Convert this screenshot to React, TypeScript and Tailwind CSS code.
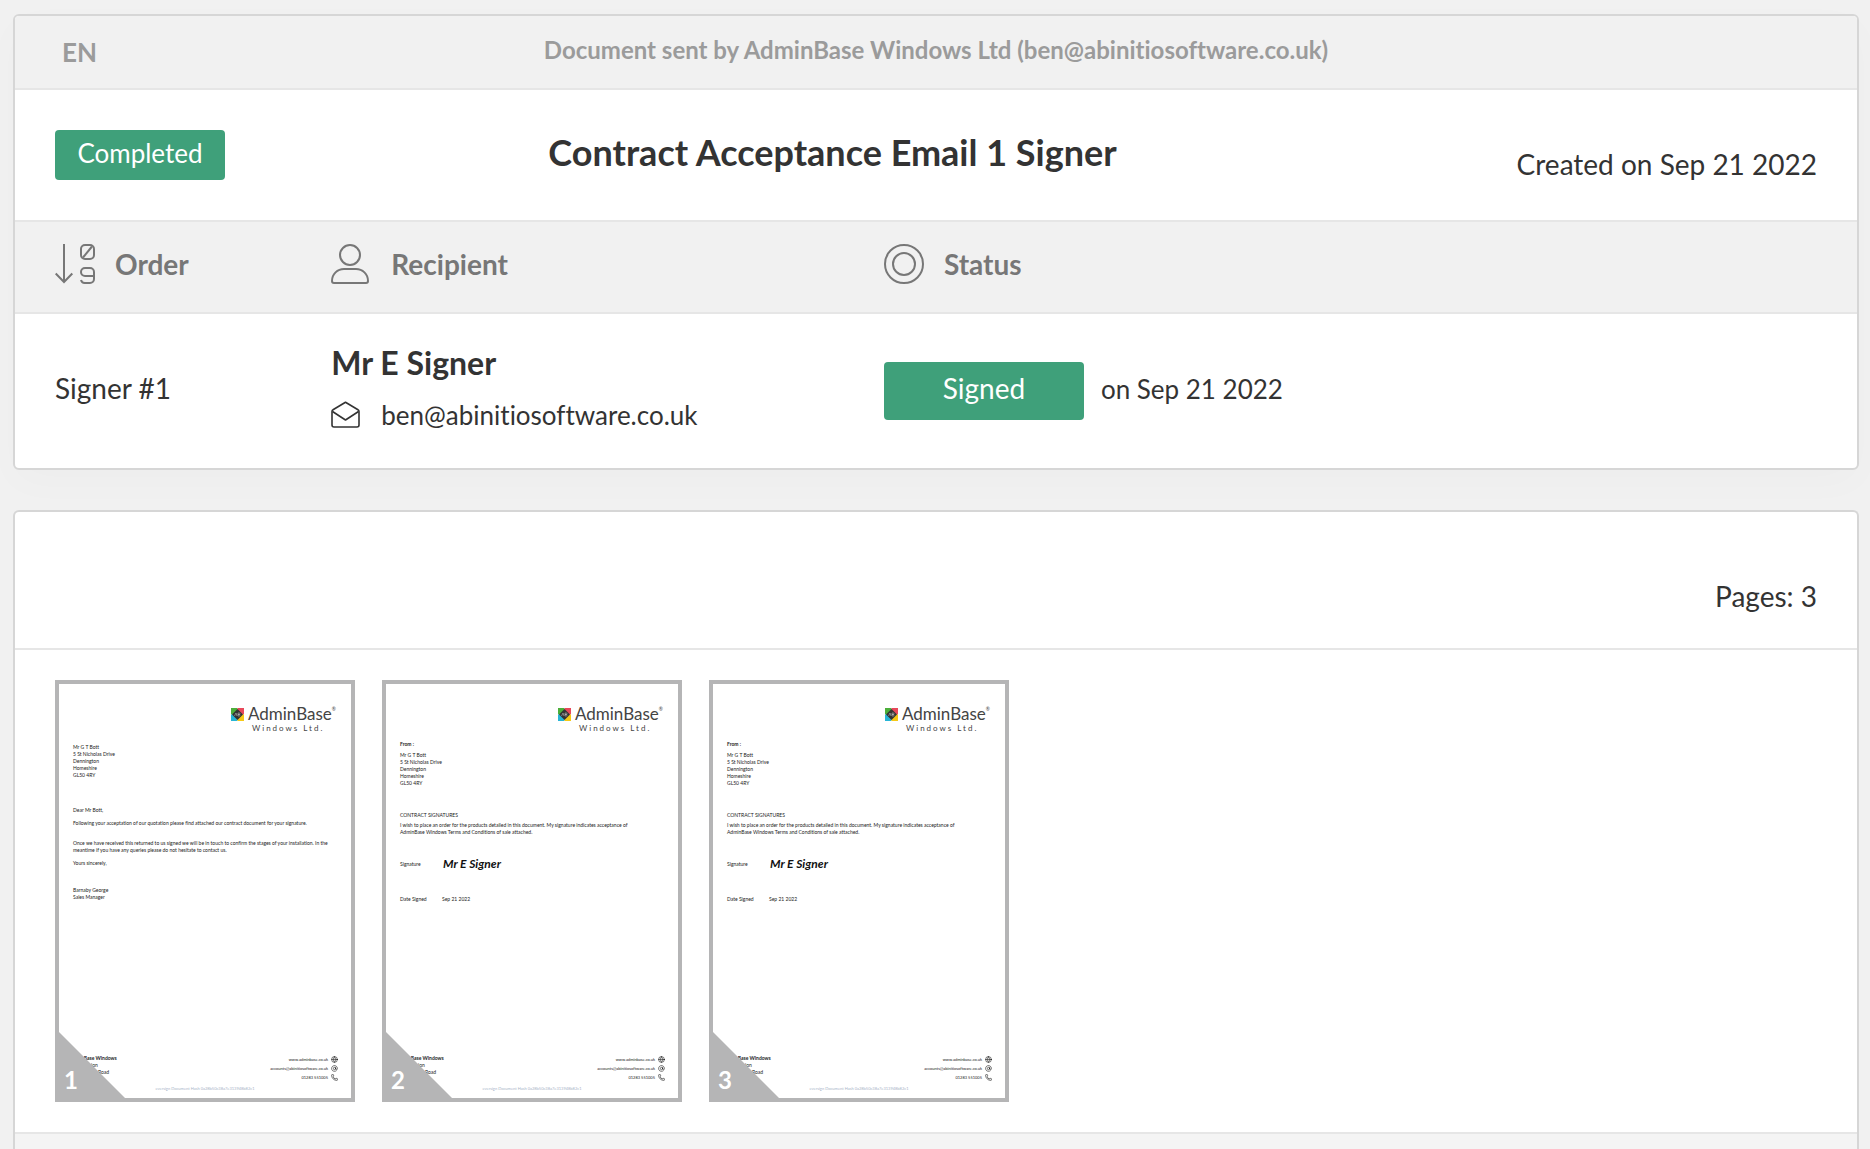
import type { ReactNode } from 'react'
import { AtSign, Globe, Phone } from 'lucide-react'

const ADDRESS = ['Mr G T Bott', '5 St Nicholas Drive', 'Dennington', 'Homeshire', 'GL50 4RY']

function OrderIcon() {
  return (
    <svg width="40" height="40" viewBox="0 0 40 40" fill="none" stroke="currentColor" strokeWidth="2" className="shrink-0">
      <path d="M9 0v38M0.7 29.500 9 38l8.300-8.500" />
      <rect x="26" y="1" width="13" height="14" rx="4" />
      <path d="M28 13.500 37 2.500" />
      <path d="M39 32h-9a4 4 0 0 1-4-4 4 4 0 0 1 4-4h5a4 4 0 0 1 4 4v7a4 4 0 0 1-4 4h-5a4 4 0 0 1-4-3" />
    </svg>
  )
}

function RecipientIcon() {
  return (
    <svg width="40" height="40" viewBox="0 0 40 40" fill="none" stroke="currentColor" strokeWidth="2" className="shrink-0">
      <circle cx="19" cy="11" r="10" />
      <path d="M1 37c0-7 5.500-12 12-12h12c6.500 0 12 5 12 12a2 2 0 0 1-2 2H3a2 2 0 0 1-2-2Z" />
    </svg>
  )
}

function StatusIcon() {
  return (
    <svg width="40" height="40" viewBox="0 0 40 40" fill="none" stroke="currentColor" strokeWidth="2" className="shrink-0">
      <circle cx="20" cy="20" r="19" />
      <circle cx="20" cy="20" r="11" />
    </svg>
  )
}

function EnvelopeIcon() {
  return (
    <svg width="30" height="28" viewBox="0 0 30 28" fill="none" stroke="currentColor" strokeWidth="1.600" strokeLinejoin="round" className="shrink-0">
      <path d="M1 10.500v13.500a2 2 0 0 0 2 2h23a2 2 0 0 0 2-2V10.500a2 2 0 0 0-1-1.700L14.500 1.200 2 8.800a2 2 0 0 0-1 1.700Z" />
      <path d="M1.500 10.500 14.500 19l13-8.500" />
    </svg>
  )
}

function BrandLogo() {
  return (
    <div className="flex justify-end gap-1 pr-[15px] pt-5">
      <svg width="13" height="13" viewBox="0 0 13 13" className="mt-1 shrink-0">
        <path d="M0 0h6.500v6.500H0z" fill="#4caf3a" />
        <path d="M6.500 0H13v6.500H6.500z" fill="#e8485a" />
        <path d="M0 6.500h6.500V13H0z" fill="#27b5d6" />
        <path d="M6.500 6.500H13V13H6.500z" fill="#f6c915" />
        <path d="M6.500 1 12 6.500 6.500 12 1 6.500z" fill="#333" />
        <path d="M3.500 8 5 5l1 3M7 5v3h1.500a.8.8 0 0 0 0-1.500H7h1.300a.7.7 0 0 0 0-1.500z" stroke="#ccc" strokeWidth="0.500" fill="none" />
      </svg>
      <div className="text-[#444]">
        <div className="flex">
          <span className="text-[17px] leading-5">AdminBase</span>
          <span className="text-[5px] leading-[10px]">®</span>
        </div>
        <div className="pl-1 text-[8px] leading-2 tracking-[2px]">Windows Ltd.</div>
      </div>
    </div>
  )
}

function LetterBody() {
  return (
    <div className="px-[14px] pt-3">
      {ADDRESS.map(line => <p key={line}>{line}</p>)}
      <p className="mt-7">Dear Mr Bott,</p>
      <p className="mt-[6px]">Following your acceptation of our quotation please find attached our contract document for your signature.</p>
      <p className="mt-[13px]">
        Once we have received this returned to us signed we will be in touch to confirm the stages of your installation. In the
        meantime if you have any queries please do not hesitate to contact us.
      </p>
      <p className="mt-[6px]">Yours sincerely,</p>
      <p className="mt-5">Barnaby George</p>
      <p>Sales Manager</p>
    </div>
  )
}

function SignatureBody() {
  return (
    <div className="pt-[9px] pr-8 pl-[14px]">
      <p className="font-bold">From :</p>
      <div className="mt-1">
        {ADDRESS.map(line => <p key={line}>{line}</p>)}
      </div>
      <p className="mt-[25px]">CONTRACT SIGNATURES</p>
      <p className="mt-[3px]">
        I wish to place an order for the products detailed in this document. My signature indicates acceptance of
        AdminBase Windows Terms and Conditions of sale attached.
      </p>
      <div className="mt-5 flex items-center">
        <p className="w-[43px]">Signature</p>
        <p className="text-[12px] leading-4 font-bold italic text-[#111]">Mr E Signer</p>
      </div>
      <div className="mt-6 flex">
        <p className="w-[42px]">Date Signed</p>
        <p>Sep 21 2022</p>
      </div>
    </div>
  )
}

function PageFooter() {
  return (
    <div className="mt-auto">
      <div className="flex justify-between pr-[13px]">
        {/* The start of each line sits under the folded corner */}
        <div>
          <p className="pl-[22px] font-bold">nBase Windows</p>
          <p className="pl-8">ion</p>
          <p className="pl-[39px]">Road</p>
        </div>
        <div className="text-[4px] leading-[9px]">
          <p className="flex items-center justify-end gap-[3px]">www.adminbase.co.uk <Globe size={7} /></p>
          <p className="flex items-center justify-end gap-[3px]">accounts@abinitiosoftware.co.uk <AtSign size={7} /></p>
          <p className="flex items-center justify-end gap-[3px]">01283 551005 <Phone size={7} /></p>
        </div>
      </div>
      <p className="pb-[6px] pt-1 text-center text-[4px] leading-[6px] text-[#a9b4c8]">
        eversign Document Hash 0a28b50c38a7e313948b82c1
      </p>
    </div>
  )
}

function PageThumb({ number, children }: { number: number; children: ReactNode }) {
  return (
    <a
      href={`#page-${number}`}
      className="relative flex h-[422px] w-[300px] flex-col border-4 border-[#b5b5b6] bg-white text-[5px] leading-[7px] text-[#1a1a1a]"
    >
      <BrandLogo />
      {children}
      <PageFooter />
      {/* Folded corner with the page number */}
      <span className="absolute bottom-0 left-0 size-[66px] bg-[#b5b5b6] [clip-path:polygon(0_0,100%_100%,0_100%)]" />
      <span className="absolute bottom-1 left-[5px] text-[24px] leading-7 font-bold text-white">{number}</span>
    </a>
  )
}

function HeaderCell({ icon, children }: { icon: ReactNode; children: ReactNode }) {
  return (
    <th className="pl-10 pt-[22px] pb-7 text-left">
      <div className="flex items-center gap-5">
        {icon}
        {children}
      </div>
    </th>
  )
}

export default function App() {
  return (
    <div className="flex min-h-screen flex-col gap-10 bg-[#f1f1f1] pt-[14px] pr-[11px] pl-[13px] font-['Lato',sans-serif] text-[#333] [font-variant-ligatures:no-common-ligatures]">
      <section className="overflow-hidden rounded-md border-2 border-[#d6d6d6] bg-white shadow-[0_12px_40px_rgba(0,0,0,0.02)]">
        <header className="grid h-[74px] grid-cols-[1fr_auto_1fr] items-center border-b-2 border-[#e6e6e6] bg-[#f1f1f1] px-10 font-bold text-[#9b9b9b]">
          <select aria-label="Language" className="w-20 appearance-none pl-[7px] text-[26px] leading-8">
            <option>EN</option>
          </select>
          <p className="pb-1 text-[24px] leading-8">
            Document sent by AdminBase Windows Ltd (ben@abinitiosoftware.co.uk)
          </p>
        </header>

        <div className="grid grid-cols-[28%_1fr_auto] px-10 py-10">
          <div>
            <span className="inline-flex h-[50px] w-[170px] items-center justify-center rounded-sm bg-[#3fa07a] pb-1 text-[26px] text-white">
              Completed
            </span>
          </div>
          <h1 className="text-[36px] leading-11 font-bold">Contract Acceptance Email 1 Signer</h1>
          <p className="self-end text-[28px] leading-8">Created on Sep 21 2022</p>
        </div>

        <table className="w-full table-fixed border-collapse">
          <colgroup>
            <col className="w-[15%]" />
            <col className="w-[30%]" />
            <col />
          </colgroup>
          <thead>
            <tr className="border-y-2 border-[#e6e6e6] bg-[#f1f1f1] text-[28px] leading-10 text-[#777]">
              <HeaderCell icon={<OrderIcon />}>Order</HeaderCell>
              <HeaderCell icon={<RecipientIcon />}>Recipient</HeaderCell>
              <HeaderCell icon={<StatusIcon />}>Status</HeaderCell>
            </tr>
          </thead>
          <tbody>
            <tr>
              <td className="pl-10 pb-[6px] text-[28px]">Signer #1</td>
              <td className="pl-10 pt-[29px] pb-[35px]">
                <p className="text-[32px] leading-10 font-bold">Mr E Signer</p>
                <div className="mt-[14px] flex items-center gap-5">
                  <EnvelopeIcon />
                  <span className="text-[26px] leading-9">ben@abinitiosoftware.co.uk</span>
                </div>
              </td>
              <td className="pl-10">
                <div className="flex items-center gap-[17px] text-[26px]">
                  <span className="flex h-[58px] w-[200px] items-center justify-center rounded-sm bg-[#3fa07a] pb-[6px] text-[28px] text-white">
                    Signed
                  </span>
                  <span className="pb-1">on Sep 21 2022</span>
                </div>
              </td>
            </tr>
          </tbody>
        </table>
      </section>

      <section className="flex flex-1 flex-col overflow-hidden rounded-t-md border-2 border-b-0 border-[#d6d6d6] bg-white">
        <div className="border-b-2 border-[#e6e6e6] px-10 pt-[68px] pb-9 text-right text-[28px] leading-8">Pages: 3</div>
        <div className="flex flex-wrap gap-[27px] px-10 py-[30px]">
          <PageThumb number={1}><LetterBody /></PageThumb>
          <PageThumb number={2}><SignatureBody /></PageThumb>
          <PageThumb number={3}><SignatureBody /></PageThumb>
        </div>
        <div className="flex-1 border-t-2 border-[#e6e6e6] bg-[#f4f4f4]" />
      </section>
    </div>
  )
}
